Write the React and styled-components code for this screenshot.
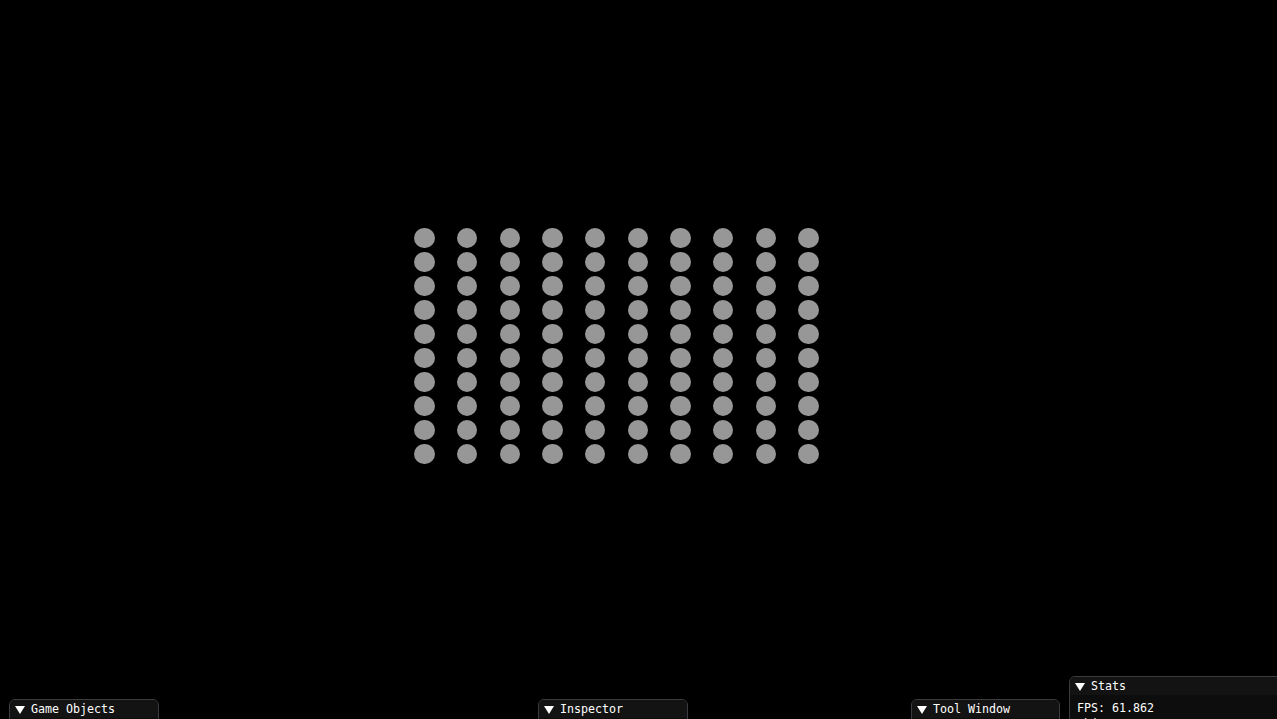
import React from 'react';
import styled, { createGlobalStyle } from 'styled-components';

const GlobalStyle = createGlobalStyle`
  html, body {
    margin: 0;
    padding: 0;
    background: #000;
    overflow: hidden;
  }
  body {
    font-family: "DejaVu Sans Mono", "Liberation Mono", monospace;
  }
`;

const Scene = styled.div`
  position: relative;
  width: 100vw;
  height: 100vh;
  background: #000;
  overflow: hidden;
  display: flex;
  align-items: flex-start;
  padding: 227.5px 0 0 414.3px;
  box-sizing: border-box;
`;

const DotGrid = styled.div`
  display: grid;
  grid-template-columns: repeat(10, 20.5px);
  column-gap: 22.17px;
  row-gap: 3.5px;
`;

const Dot = styled.div`
  width: 20.5px;
  height: 20.5px;
  border-radius: 50%;
  background: #979797;
`;

// imgui windows float freely on the canvas
const Window = styled.div`
  position: absolute;
  left: ${p => p.$x}px;
  top: ${p => p.$y}px;
  width: ${p => p.$w}px;
  height: 200px;
  box-sizing: border-box;
  border: 1px solid #3b3b42;
  border-radius: 6px 6px 0 0;
  background: #0d0d0d;
  overflow: hidden;
  color: #fff;
  font-size: 11.65px;
`;

const TitleBar = styled.div`
  height: 18px;
  display: flex;
  align-items: center;
  gap: 6px;
  padding-left: 5px;
  background: #131313;
  line-height: 13px;
`;

const Arrow = styled.svg`
  width: 10px;
  height: 8px;
  flex: none;
  margin-top: 1px;
`;

const Body = styled.div`
  padding: 7px 7px 0;
  display: flex;
  flex-direction: column;
  gap: 3px;
  line-height: 13px;
  white-space: nowrap;
`;

const Caret = () => (
  <Arrow viewBox="0 0 10 8">
    <polygon points="0,0 10,0 5,8" fill="#fff" />
  </Arrow>
);

const Panel = ({ title, x, y, w, children }) => (
  <Window $x={x} $y={y} $w={w}>
    <TitleBar>
      <Caret />
      <span>{title}</span>
    </TitleBar>
    {children && <Body>{children}</Body>}
  </Window>
);

const dots = Array.from({ length: 100 }, (_, i) => i);

export default function App() {
  return (
    <>
      <GlobalStyle />
      <Scene>
        <DotGrid>
          {dots.map(i => (
            <Dot key={i} />
          ))}
        </DotGrid>
        <Panel title="Game Objects" x={9} y={699} w={150} />
        <Panel title="Inspector" x={538} y={699} w={150} />
        <Panel title="Tool Window" x={911} y={699} w={149} />
        <Panel title="Stats" x={1069} y={676} w={230}>
          <span>FPS: 61.862</span>
          <span>Objects: 100</span>
        </Panel>
      </Scene>
    </>
  );
}
